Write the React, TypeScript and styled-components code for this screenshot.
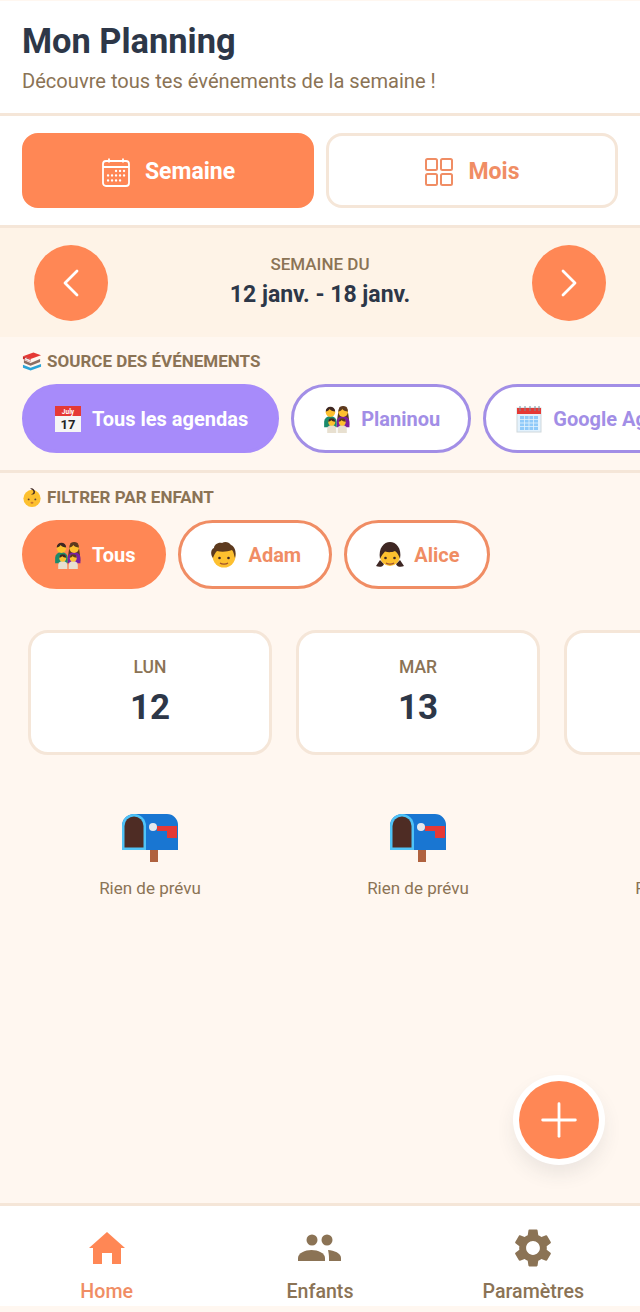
import styled, { createGlobalStyle } from 'styled-components';
import { ChevronLeft, ChevronRight, Plus } from 'lucide-react';
import { MdSettings } from 'react-icons/md';

const GlobalStyle = createGlobalStyle`
  html, body {
    margin: 0;
    padding: 0;
    background: #fff;
  }
  * {
    box-sizing: border-box;
  }
`;

const orange = '#ff8755';
const orangeSoft = '#f08d64';
const purple = '#a78bfa';
const purpleSoft = '#a28ee6';
const navy = '#2d3748';
const brown = '#8b7355';
const line = '#f5e6d8';

const Screen = styled.div`
  width: 640px;
  height: 1312px;
  overflow: hidden;
  position: relative;
  display: flex;
  flex-direction: column;
  background: #fff7f0;
  font-family: Roboto, 'Liberation Sans', sans-serif;
`;

const Header = styled.header`
  height: 116px;
  padding: 19px 22px 0;
  background: #fff;
  border-top: 1px solid #fff7f0;
  border-bottom: 3px solid ${line};
`;

const Title = styled.h1`
  margin: 0;
  font-size: 34.4px;
  line-height: 42px;
  font-weight: 700;
  color: ${navy};
`;

const Subtitle = styled.p`
  margin: 6px 0 0;
  font-size: 20.1px;
  line-height: 26px;
  color: ${brown};
`;

const ViewTabs = styled.div`
  height: 112px;
  padding: 17px 22px 0;
  display: flex;
  gap: 12px;
  background: #fff;
  border-bottom: 3px solid ${line};
`;

const ViewTab = styled.div<{ $active?: boolean }>`
  flex: 1;
  height: 75px;
  padding-top: 2px;
  display: flex;
  align-items: center;
  justify-content: center;
  gap: 14px;
  border-radius: 16px;
  border: 3px solid ${p => (p.$active ? orange : line)};
  background: ${p => (p.$active ? orange : '#fff')};
  color: ${p => (p.$active ? '#fff' : orangeSoft)};
  font-size: 23px;
  font-weight: 700;
`;

const WeekBar = styled.div`
  height: 109px;
  padding: 0 34px;
  display: flex;
  align-items: center;
  justify-content: space-between;
  background: #fef3e7;
`;

const RoundButton = styled.div`
  width: 74px;
  height: 76px;
  border-radius: 50%;
  display: flex;
  align-items: center;
  justify-content: center;
  background: ${orange};
  color: #fff;
`;

const WeekText = styled.div`
  padding-bottom: 3px;
  text-align: center;
`;

const WeekLabel = styled.div`
  font-size: 17px;
  line-height: 20px;
  font-weight: 500;
  color: ${brown};
`;

const WeekRange = styled.div`
  margin-top: 8px;
  font-size: 23px;
  line-height: 26px;
  font-weight: 700;
  color: ${navy};
`;

const FilterSection = styled.section<{ $divided?: boolean }>`
  flex: none;
  padding: 13px 0 0 22px;
  height: ${p => (p.$divided ? '136px' : '117px')};
  border-bottom: ${p => (p.$divided ? `3px solid ${line}` : '0')};
`;

const SectionLabel = styled.div`
  display: flex;
  align-items: center;
  gap: 5px;
  height: 22px;
  font-size: 17px;
  font-weight: 700;
  color: ${brown};
`;

const PillRow = styled.div`
  margin-top: 12px;
  display: flex;
  gap: 12px;
`;

const Pill = styled.div<{ $color: string; $soft: string; $active?: boolean }>`
  flex: none;
  height: 69px;
  padding: 0 28px 0 29px;
  display: flex;
  align-items: center;
  gap: 10px;
  border-radius: 35px;
  border: 3px solid ${p => (p.$active ? p.$color : p.$soft)};
  background: ${p => (p.$active ? p.$color : '#fff')};
  color: ${p => (p.$active ? '#fff' : p.$soft)};
  font-size: 20px;
  font-weight: 700;
  white-space: nowrap;
`;

const Days = styled.div`
  flex: 1;
  padding: 40px 0 0 28px;
  display: flex;
  gap: 24px;
`;

const DayColumn = styled.div`
  flex: none;
  width: 244px;
  display: flex;
  flex-direction: column;
  align-items: center;
`;

const DayCard = styled.div`
  width: 100%;
  height: 125px;
  padding-top: 24px;
  text-align: center;
  background: #fff;
  border: 3px solid ${line};
  border-radius: 20px;
`;

const DayName = styled.div`
  font-size: 17.5px;
  line-height: 20px;
  font-weight: 500;
  color: ${brown};
`;

const DayNumber = styled.div`
  margin-top: 11px;
  font-size: 35px;
  line-height: 40px;
  font-weight: 700;
  color: ${navy};
`;

const EmptyBox = styled.div`
  margin-top: 59px;
  height: 48px;
`;

const EmptyText = styled.div`
  margin-top: 16px;
  font-size: 17px;
  line-height: 20px;
  color: ${brown};
`;

const Fab = styled.div`
  position: absolute;
  right: 41px;
  top: 1081px;
  width: 80px;
  height: 78px;
  border-radius: 50%;
  display: flex;
  align-items: center;
  justify-content: center;
  background: ${orange};
  color: #fff;
  box-shadow: 0 0 0 6px #fff, 0 10px 20px 4px rgba(45, 55, 72, 0.1);
`;

const BottomNav = styled.nav`
  flex: none;
  height: 103px;
  margin-bottom: 6px;
  display: flex;
  background: #fff;
  border-top: 3px solid ${line};
`;

const NavItem = styled.div<{ $active?: boolean }>`
  flex: 1;
  display: flex;
  flex-direction: column;
  align-items: center;
  padding-top: 20px;
  color: ${p => (p.$active ? orange : brown)};
`;

const NavIcon = styled.div`
  height: 44px;
  display: flex;
  align-items: center;
  justify-content: center;
`;

const NavText = styled.span<{ $active?: boolean }>`
  margin-top: 10px;
  font-size: 19.6px;
  font-weight: 500;
  line-height: 24px;
  color: ${p => (p.$active ? orangeSoft : brown)};
`;

const CalendarIcon = () => (
  <svg width="30" height="30" viewBox="0 0 30 30" fill="none" stroke="currentColor" strokeWidth="1.8">
    <rect x="2" y="4" width="26" height="25" rx="3" />
    <path d="M2 10h26M8 1.5v4M22 1.5v4" />
    <path
      d="M15 14h.1M19 14h.1M23 14h.1M7 18.500h.1M11 18.500h.1M15 18.500h.1M19 18.500h.1M23 18.500h.1M7 23.500h.1M11 23.500h.1M15 23.500h.1M19 23.500h.1"
      strokeWidth="2.3"
      strokeLinecap="round"
    />
  </svg>
);

const GridIcon = () => (
  <svg width="30" height="30" viewBox="0 0 30 30" fill="none" stroke="currentColor" strokeWidth="2">
    <rect x="2" y="2" width="11" height="11" rx="1.500" />
    <rect x="17" y="2" width="11" height="11" rx="1.500" />
    <rect x="2" y="17" width="11" height="11" rx="1.500" />
    <rect x="17" y="17" width="11" height="11" rx="1.500" />
  </svg>
);

const BooksIcon = () => (
  <svg width="20" height="21" viewBox="0 0 21 21">
    <path d="M1 5l11-4 8 3-11 4z" fill="#e53935" />
    <path d="M1 5l8 3v3L1 8z" fill="#c62828" />
    <path d="M2 9l7 3 10-4v3l-10 4-7-3z" fill="#8d6e63" />
    <path d="M1 14l8 3 11-4v3l-11 4-8-3z" fill="#29a3d8" />
    <path d="M3 6.500l6 2.500v2L3 8.500z" fill="#eee" />
  </svg>
);

const BabyIcon = () => (
  <svg width="20" height="21" viewBox="0 0 20 22">
    <circle cx="10" cy="12" r="9" fill="#fdc02f" />
    <path d="M8 1.500a4 4 0 0 1 5 5 3.500 3.500 0 0 1-4 1c2 0 2.800-1.500 2.500-3-.4-1.500-2-2-3.500-3z" fill="#3e2723" />
    <circle cx="6.500" cy="13" r="1" fill="#5d4037" />
    <circle cx="13.500" cy="13" r="1" fill="#5d4037" />
    <ellipse cx="10" cy="16.500" rx="1.600" ry="1" fill="#c9772c" />
  </svg>
);

const TearOffIcon = () => (
  <svg width="28" height="26" viewBox="-1 0 28 26">
    <rect x="0" y="0" width="26" height="26" fill="#f5f5f5" />
    <rect x="0" y="0" width="26" height="10" fill="#e53935" />
    <text x="13" y="7.500" fontSize="6.500" fontWeight="700" textAnchor="middle" fill="#fff" fontFamily="Roboto">July</text>
    <text x="13" y="23" fontSize="13" fontWeight="700" textAnchor="middle" fill="#222" fontFamily="Roboto">17</text>
  </svg>
);

const SpiralIcon = () => (
  <svg width="28" height="28" viewBox="-1 0 28 28">
    <rect x="1" y="3" width="24" height="24" fill="#e3f2fd" stroke="#cfd8dc" />
    <rect x="1" y="3" width="24" height="6" fill="#e53935" />
    <path d="M4 11h18v14H4z" fill="#90caf9" />
    <path d="M4 14.500h18M4 18h18M4 21.500h18M8.500 11v14M13 11v14M17.500 11v14" stroke="#e3f2fd" strokeWidth="0.8" />
    <path d="M4 1v5M9 1v5M14 1v5M19 1v5M23 1v5" stroke="#78909c" strokeWidth="1" />
  </svg>
);

// tête + corps d'un membre de la famille
const Person = ({ x, y, s, hair, shirt }: { x: number; y: number; s: number; hair: string; shirt: string }) => (
  <g transform={`translate(${x} ${y}) scale(${s})`}>
    <path d="M-8 20a8 7 0 0 1 16 0v7h-16z" fill={shirt} />
    <circle cy="8" r="6" fill="#fdc02f" />
    <path d="M-6 7a6 6 0 0 1 12 0c-3 0-6-1-7-3-1 2-3 3-5 3z" fill={hair} />
  </g>
);

const FamilyIcon = ({ size = 28 }: { size?: number }) => (
  <svg width={size} height={size} viewBox="0 0 32 32">
    <path d="M18 5c0-5 10-5 10 0 1 6 2 10 2 18h-14c0-8 1-12 2-18z" fill="#5d3a1e" />
    <Person x={8.500} y={1} s={0.9} hair="#3e2723" shirt="#1b8a6b" />
    <Person x={23} y={1} s={0.9} hair="#5d3a1e" shirt="#7b1fa2" />
    <Person x={10} y={14.500} s={0.65} hair="#3e2723" shirt="#e8e0d0" />
    <Person x={22} y={14.500} s={0.65} hair="#5d3a1e" shirt="#e8e0d0" />
  </svg>
);

const BoyIcon = () => (
  <svg width="28" height="28" viewBox="0 0 28 28">
    <circle cx="14" cy="15" r="11.500" fill="#fdc02f" />
    <path d="M3 17C0 13 1 8 4 7c0-3 4-6 8-5 3-2 7-1 9 2 3 1 6 6 4 13-1-2-1-6-3-8-5 2-11 2-15 1-2 2-3 4-4 7z" fill="#5d3a1e" />
    <circle cx="9.500" cy="17" r="1.300" fill="#3e2723" />
    <circle cx="18.500" cy="17" r="1.300" fill="#3e2723" />
    <path d="M10 22c2 1.500 6 1.500 8 0" stroke="#a0522d" strokeWidth="1.200" fill="none" />
  </svg>
);

const GirlIcon = () => (
  <svg width="28" height="28" viewBox="0 0 28 28">
    <path d="M4 19l-4 6c3 1.500 7 1 8-2zM24 19l4 6c-3 1.500-7 1-8-2z" fill="#3e2723" />
    <circle cx="14" cy="15" r="10" fill="#fdc02f" />
    <path d="M4 18C2 7 8 1 14 1s12 6 10 17c-1-3-2-6-5-8-3 1.500-7 1.500-10 .5-2 2-4 5-5 7.500z" fill="#3e2723" />
    <circle cx="9.500" cy="17" r="1.300" fill="#3e2723" />
    <circle cx="18.500" cy="17" r="1.300" fill="#3e2723" />
    <path d="M10 22c2 1.500 6 1.500 8 0" stroke="#a0522d" strokeWidth="1.200" fill="none" />
  </svg>
);

const MailboxIcon = () => (
  <svg width="58" height="48" viewBox="0 0 58 48" style={{ display: 'block' }}>
    <rect x="29" y="36" width="8" height="12" fill="#b0623f" />
    <path d="M12 0h34a11 11 0 0 1 11 11v25H1V12A12 12 0 0 1 12 0z" fill="#1976d2" />
    <path d="M1 36V12A12 12 0 0 1 13 0a12 12 0 0 1 12 12v24z" fill="#4fc3f7" />
    <path d="M3.500 33.500V12a9.500 9.500 0 0 1 19 0v21.500z" fill="#4e2c24" />
    <path d="M36 12h20v12H46v-7H36z" fill="#e53935" />
    <circle cx="32" cy="13" r="4" fill="#e3e8ee" />
  </svg>
);

const HomeIcon = () => (
  <svg width="36" height="32" viewBox="0 0 36 32" fill="currentColor">
    <path d="M18 0l18 16h-4v16h-9V21H13v11H4V16H0z" />
  </svg>
);

const PeopleIcon = () => (
  <svg width="44" height="28" viewBox="0 0 44 28" fill="currentColor">
    <circle cx="14" cy="6" r="5.500" />
    <circle cx="29" cy="6" r="5.500" />
    <path d="M0 27v-3c0-5 7-8 13.500-8S27 19 27 24v3z" />
    <path d="M30 16c6 .5 13 3 13 8v3H31v-3c0-3-.5-6-1-8z" />
  </svg>
);

const App = () => (
  <Screen>
    <GlobalStyle />
    <Header>
      <Title>Mon Planning</Title>
      <Subtitle>Découvre tous tes événements de la semaine !</Subtitle>
    </Header>
    <ViewTabs>
      <ViewTab $active>
        <CalendarIcon />
        Semaine
      </ViewTab>
      <ViewTab>
        <GridIcon />
        Mois
      </ViewTab>
    </ViewTabs>
    <WeekBar>
      <RoundButton>
        <ChevronLeft size={48} strokeWidth={1.4} />
      </RoundButton>
      <WeekText>
        <WeekLabel>SEMAINE DU</WeekLabel>
        <WeekRange>12 janv. - 18 janv.</WeekRange>
      </WeekText>
      <RoundButton>
        <ChevronRight size={48} strokeWidth={1.4} />
      </RoundButton>
    </WeekBar>
    <FilterSection $divided>
      <SectionLabel>
        <BooksIcon />
        SOURCE DES ÉVÉNEMENTS
      </SectionLabel>
      <PillRow>
        <Pill $color={purple} $soft={purpleSoft} $active>
          <TearOffIcon />
          Tous les agendas
        </Pill>
        <Pill $color={purple} $soft={purpleSoft}>
          <FamilyIcon />
          Planinou
        </Pill>
        <Pill $color={purple} $soft={purpleSoft}>
          <SpiralIcon />
          Google Agenda
        </Pill>
      </PillRow>
    </FilterSection>
    <FilterSection>
      <SectionLabel>
        <BabyIcon />
        FILTRER PAR ENFANT
      </SectionLabel>
      <PillRow>
        <Pill $color={orange} $soft={orangeSoft} $active>
          <FamilyIcon />
          Tous
        </Pill>
        <Pill $color={orange} $soft={orangeSoft}>
          <BoyIcon />
          Adam
        </Pill>
        <Pill $color={orange} $soft={orangeSoft}>
          <GirlIcon />
          Alice
        </Pill>
      </PillRow>
    </FilterSection>
    <Days>
      {[
        ['LUN', '12'],
        ['MAR', '13'],
        ['MER', '14'],
      ].map(([name, num]) => (
        <DayColumn key={name}>
          <DayCard>
            <DayName>{name}</DayName>
            <DayNumber>{num}</DayNumber>
          </DayCard>
          <EmptyBox>
            <MailboxIcon />
          </EmptyBox>
          <EmptyText>Rien de prévu</EmptyText>
        </DayColumn>
      ))}
    </Days>
    <Fab>
      <Plus size={56} strokeWidth={1.2} />
    </Fab>
    <BottomNav>
      <NavItem $active>
        <NavIcon>
          <HomeIcon />
        </NavIcon>
        <NavText $active>Home</NavText>
      </NavItem>
      <NavItem>
        <NavIcon>
          <PeopleIcon />
        </NavIcon>
        <NavText>Enfants</NavText>
      </NavItem>
      <NavItem>
        <NavIcon>
          <MdSettings size={46} />
        </NavIcon>
        <NavText>Paramètres</NavText>
      </NavItem>
    </BottomNav>
  </Screen>
);

export default App;
